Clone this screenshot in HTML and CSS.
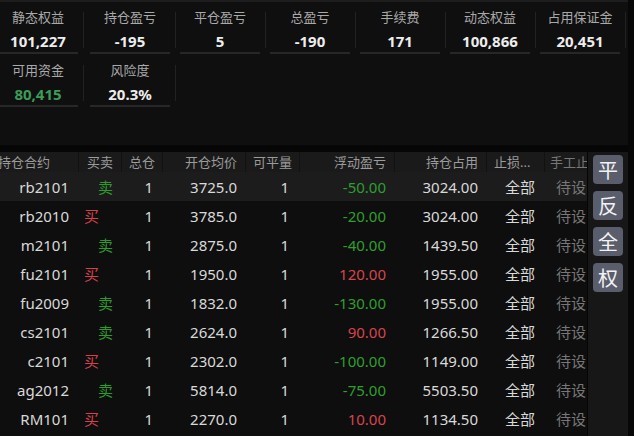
FILE: index.html
```html
<!DOCTYPE html>
<html lang="zh-CN">
<head>
<meta charset="utf-8">
<title>持仓</title>
<link rel="stylesheet" href="styles.css">
</head>
<body>
<div class="app">
  <div class="main">
    <section class="summary">
      <div class="stat"><div class="label">静态权益</div><div class="value">101,227</div></div>
      <div class="stat"><div class="label">持仓盈亏</div><div class="value">-195</div></div>
      <div class="stat"><div class="label">平仓盈亏</div><div class="value">5</div></div>
      <div class="stat"><div class="label">总盈亏</div><div class="value">-190</div></div>
      <div class="stat"><div class="label">手续费</div><div class="value">171</div></div>
      <div class="stat"><div class="label">动态权益</div><div class="value">100,866</div></div>
      <div class="stat"><div class="label">占用保证金</div><div class="value">20,451</div></div>
      <div class="stat"><div class="label">可用资金</div><div class="value green">80,415</div></div>
      <div class="stat"><div class="label">风险度</div><div class="value">20.3%</div></div>
    </section>
    <div class="positions">
      <div class="table">
        <div class="row head">
          <div class="c c1">持仓合约</div><div class="c c2">买卖</div><div class="c c3">总仓</div><div class="c c4">开仓均价</div><div class="c c5">可平量</div><div class="c c6">浮动盈亏</div><div class="c c7">持仓占用</div><div class="c c8">止损...</div><div class="c c9">手工止损</div>
        </div>
        <div class="row sel">
          <div class="c c1">rb2101</div><div class="c c2 sell">卖</div><div class="c c3">1</div><div class="c c4">3725.0</div><div class="c c5">1</div><div class="c c6 down">-50.00</div><div class="c c7">3024.00</div><div class="c c8">全部</div><div class="c c9">待设</div>
        </div>
        <div class="row">
          <div class="c c1">rb2010</div><div class="c c2 buy">买</div><div class="c c3">1</div><div class="c c4">3785.0</div><div class="c c5">1</div><div class="c c6 down">-20.00</div><div class="c c7">3024.00</div><div class="c c8">全部</div><div class="c c9">待设</div>
        </div>
        <div class="row">
          <div class="c c1">m2101</div><div class="c c2 sell">卖</div><div class="c c3">1</div><div class="c c4">2875.0</div><div class="c c5">1</div><div class="c c6 down">-40.00</div><div class="c c7">1439.50</div><div class="c c8">全部</div><div class="c c9">待设</div>
        </div>
        <div class="row">
          <div class="c c1">fu2101</div><div class="c c2 buy">买</div><div class="c c3">1</div><div class="c c4">1950.0</div><div class="c c5">1</div><div class="c c6 up">120.00</div><div class="c c7">1955.00</div><div class="c c8">全部</div><div class="c c9">待设</div>
        </div>
        <div class="row">
          <div class="c c1">fu2009</div><div class="c c2 sell">卖</div><div class="c c3">1</div><div class="c c4">1832.0</div><div class="c c5">1</div><div class="c c6 down">-130.00</div><div class="c c7">1955.00</div><div class="c c8">全部</div><div class="c c9">待设</div>
        </div>
        <div class="row">
          <div class="c c1">cs2101</div><div class="c c2 sell">卖</div><div class="c c3">1</div><div class="c c4">2624.0</div><div class="c c5">1</div><div class="c c6 up">90.00</div><div class="c c7">1266.50</div><div class="c c8">全部</div><div class="c c9">待设</div>
        </div>
        <div class="row">
          <div class="c c1">c2101</div><div class="c c2 buy">买</div><div class="c c3">1</div><div class="c c4">2302.0</div><div class="c c5">1</div><div class="c c6 down">-100.00</div><div class="c c7">1149.00</div><div class="c c8">全部</div><div class="c c9">待设</div>
        </div>
        <div class="row">
          <div class="c c1">ag2012</div><div class="c c2 sell">卖</div><div class="c c3">1</div><div class="c c4">5814.0</div><div class="c c5">1</div><div class="c c6 down">-75.00</div><div class="c c7">5503.50</div><div class="c c8">全部</div><div class="c c9">待设</div>
        </div>
        <div class="row">
          <div class="c c1">RM101</div><div class="c c2 buy">买</div><div class="c c3">1</div><div class="c c4">2270.0</div><div class="c c5">1</div><div class="c c6 up">10.00</div><div class="c c7">1134.50</div><div class="c c8">全部</div><div class="c c9">待设</div>
        </div>
      </div>
      <aside class="actions">
        <button class="btn">平</button>
        <button class="btn">反</button>
        <button class="btn">全</button>
        <button class="btn">权</button>
      </aside>
    </div>
  </div>
  <div class="edge"></div>
</div>
</body>
</html>
```
FILE: styles.css
```css
* { box-sizing: border-box; }
html, body {
  margin: 0;
  padding: 0;
  background: #060606;
}
body {
  width: 634px;
  height: 436px;
  overflow: hidden;
  font-family: "Noto Sans", "Noto Sans CJK SC", sans-serif;
  color: #d8d8d8;
}
.app {
  display: flex;
  width: 634px;
  height: 436px;
}
.main {
  width: 628px;
  display: flex;
  flex-direction: column;
}
.edge {
  width: 6px;
  background: #070707;
}

/* summary */
.summary {
  height: 145px;
  background: #0f0f0f;
  border-top: 2px solid #1d1d1d;
  display: grid;
  grid-template-columns: repeat(7, 80px);
  grid-auto-rows: 53px;
  column-gap: 10px;
  margin-left: 0;
  padding-left: 0;
  align-content: start;
  overflow: hidden;
}
.summary .stat:nth-child(1),
.summary .stat:nth-child(8) {
  margin-left: -2px;
  margin-right: 2px;
}
.stat {
  position: relative;
  padding-top: 6px;
  text-align: center;
  border-bottom: 2px solid #272727;
  height: 52px;
}
.stat::after {
  content: "";
  position: absolute;
  right: -6px;
  top: 10px;
  width: 1px;
  height: 36px;
  background: #222;
}
.label {
  font-size: 13px;
  line-height: 18px;
  color: #a9a9a9;
}
.value {
  margin-top: 5px;
  font-size: 15px;
  line-height: 20px;
  font-weight: 700;
  color: #ededed;
}
.value.green { color: #3c9c5a; }

/* positions */
.positions {
  margin-top: 7px;
  flex: 1;
  display: flex;
  overflow: hidden;
}
.table {
  width: 587px;
  background: #0e0e0e;
  overflow: hidden;
}
.row {
  display: grid;
  grid-template-columns: 79px 43px 41px 83px 54px 95px 92px 58px 60px;
  height: 29px;
  align-items: center;
  font-size: 15px;
  color: #d9d9d9;
  white-space: nowrap;
}
.row.sel { background: #1c1c1c; }
.row.head {
  height: 20px;
  background: #1a1a1a;
  font-size: 13px;
  color: #9b9b9b;
  align-items: stretch;
}
.head .c {
  line-height: 20px;
  border-right: 1px solid #121212;
  overflow: hidden;
}
.c {
  text-align: right;
  padding-right: 10px;
  overflow: hidden;
}
.head .c1 { text-align: left; padding-left: 0; text-indent: -2px; }
.head .c2, .head .c3, .head .c5 { text-align: center; padding-right: 0; }
.head .c4, .head .c6, .head .c7 { padding-right: 8px; }
.head .c8 { text-align: left; padding-left: 7px; }
.head .c9 { text-align: left; padding-left: 5px; border-right: 0; }
.c4, .c6, .c7 { padding-right: 9px; }
.c5 { padding-right: 11px; }
.c9 { text-align: left; padding-left: 11px; padding-right: 0; color: #777; }
.buy { color: #d4414b; text-align: left; padding-left: 5px; }
.sell { color: #2c9b2c; padding-right: 9px; }
.up { color: #d6454b; }
.down { color: #2f9e2f; }

.actions {
  width: 41px;
  background: #171717;
  border-left: 1px solid #050505;
  display: flex;
  flex-direction: column;
  gap: 7px;
  padding: 3px 0 0 5px;
}
.btn {
  width: 30px;
  height: 29px;
  border: 0;
  border-radius: 4px;
  background: #595d6c;
  color: #f2f2f2;
  font-family: "Noto Sans CJK SC", sans-serif;
  font-size: 20px;
  line-height: 29px;
  padding: 0;
}
```
